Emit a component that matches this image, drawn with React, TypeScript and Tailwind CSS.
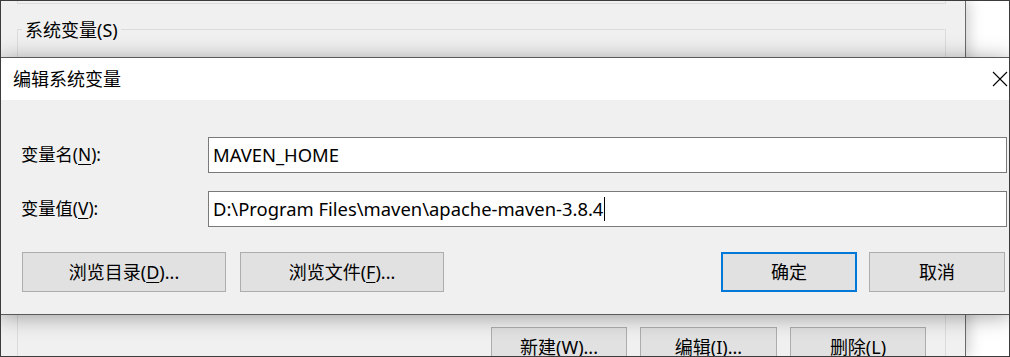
import type { ReactNode } from 'react';

const FONT = "font-[family-name:'Noto_Sans','Noto_Sans_CJK_SC',sans-serif]";

function Key({ children }: { children: ReactNode }) {
  return <span className="underline decoration-1 underline-offset-[3px]">{children}</span>;
}

function Btn({ children, primary = false, w }: { children: ReactNode; primary?: boolean; w: string }) {
  return (
    <div
      className={`flex h-[40px] shrink-0 items-center justify-center bg-[#e1e1e1] text-[18px] leading-none text-black ${
        primary ? 'border-2 border-[#0078d7]' : 'border border-[#adadad]'
      } ${w}`}
    >
      {children}
    </div>
  );
}

function Field({ children }: { children: ReactNode }) {
  return (
    <div className="flex h-[36px] w-[799px] items-center border border-[#7a7a7a] bg-white pb-[1px] pl-[4px] text-[18.4px] text-black">
      {children}
    </div>
  );
}

export default function App() {
  return (
    <div className={`relative h-[357px] w-[1010px] overflow-hidden bg-white ${FONT}`}>
      {/* window behind: 环境变量 */}
      <div className="absolute left-0 top-0 h-[357px] w-[966px] border-r border-[#6a6a6a] bg-[#f0f0f0] shadow-[3px_0_14px_rgba(0,0,0,0.2)]">
        <div className="flex flex-col pl-[17px]">
          <div className="h-[4px] w-[929px] border-x border-b border-[#dcdcdc]" />
          <div className="relative mt-[25px] h-[400px] w-[929px] border border-[#dcdcdc]">
            <span className="absolute left-[4px] top-[-12px] bg-[#f0f0f0] px-[3px] text-[18px] leading-[24px] text-black">
              系统变量(S)
            </span>
            <div className="mt-[297px] flex justify-end gap-[13px] pr-[19px]">
              <Btn w="w-[136px]">新建(<Key>W</Key>)...</Btn>
              <Btn w="w-[137px]">编辑(<Key>I</Key>)...</Btn>
              <Btn w="w-[136px]">删除(<Key>L</Key>)</Btn>
            </div>
          </div>
        </div>
      </div>

      {/* dialog */}
      <div className="absolute left-0 top-[57px] flex h-[258px] w-[1010px] flex-col border border-[#595959] bg-[#f0f0f0] shadow-[0_2px_20px_rgba(0,0,0,0.35)]">
        <div className="flex h-[42px] shrink-0 items-center justify-between bg-white pl-[12px] pr-[1px]">
          <span className="text-[18px] leading-none text-black">编辑系统变量</span>
          <svg width="16" height="16" viewBox="0 0 16 16">
            <path d="M1 1 L15 15 M15 1 L1 15" stroke="#000" strokeWidth="1.1" fill="none" />
          </svg>
        </div>

        <div className="flex flex-col pl-[20px] pr-[1px] pt-[37px]">
          <div className="flex items-center">
            <span className="w-[187px] text-[17.3px] text-black">
              变量名(<Key>N</Key>):
            </span>
            <Field>MAVEN_HOME</Field>
          </div>
          <div className="mt-[18px] flex items-center">
            <span className="w-[187px] text-[17.3px] text-black">
              变量值(<Key>V</Key>):
            </span>
            <Field>
              D:\Program Files\maven\apache-maven-3.8.4
              <span className="ml-[1px] h-[24px] w-[1px] bg-black" />
            </Field>
          </div>

          <div className="mt-[25px] flex items-center gap-[14px] pl-[1px] pr-[3px]">
            <Btn w="w-[204px]">浏览目录(<Key>D</Key>)...</Btn>
            <Btn w="w-[204px]">浏览文件(<Key>F</Key>)...</Btn>
            <div className="ml-auto flex gap-[12px]">
              <Btn primary w="w-[136px]">确定</Btn>
              <Btn w="w-[136px]">取消</Btn>
            </div>
          </div>
        </div>
      </div>

      {/* screen edge */}
      <div className="pointer-events-none absolute inset-0 border border-[#3c3c3c]" />
    </div>
  );
}
